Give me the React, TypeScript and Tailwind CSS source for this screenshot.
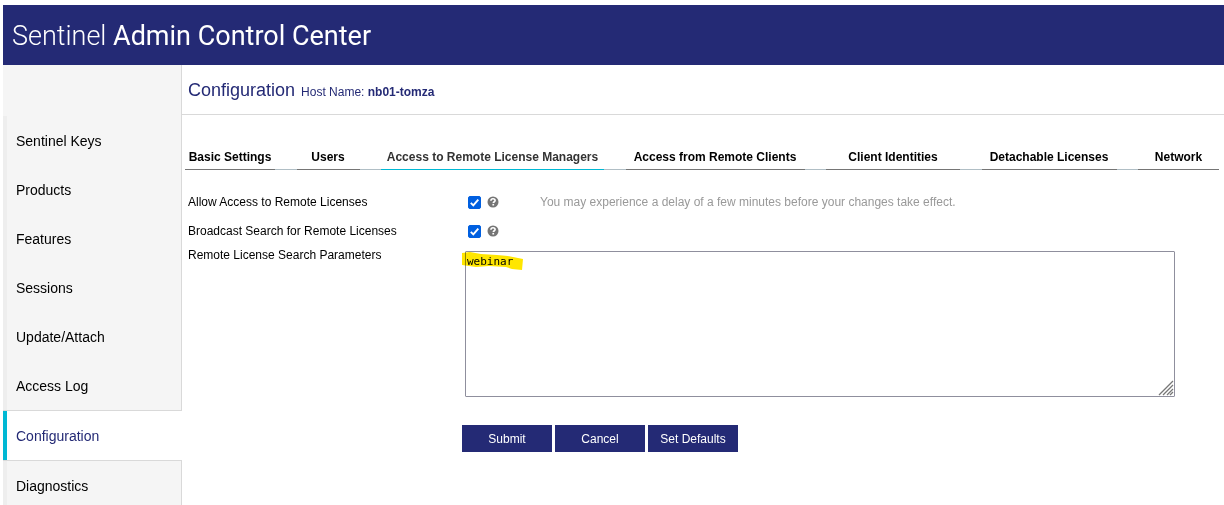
import React from 'react';

const navItems = [
  'Sentinel Keys',
  'Products',
  'Features',
  'Sessions',
  'Update/Attach',
  'Access Log',
  'Configuration',
  'Diagnostics',
];

const tabs = [
  { label: 'Basic Settings', width: 'w-[90px]' },
  { label: 'Users', width: 'w-[63px]' },
  { label: 'Access to Remote License Managers', width: 'w-[223px]', active: true },
  { label: 'Access from Remote Clients', width: 'w-[179px]' },
  { label: 'Client Identities', width: 'w-[134px]' },
  { label: 'Detachable Licenses', width: 'w-[135px]' },
  { label: 'Network', width: 'w-[81px]' },
];

function HelpIcon({ label }: { label: string }) {
  return (
    <button type="button" aria-label={label} className="cursor-pointer">
      <svg viewBox="0 0 12 12" className="block h-3 w-3">
        <circle cx="6" cy="6" r="5.5" fill="#757575" />
        <path
          d="M3.9 4.7C4 3.4 5 2.8 6 2.8c1.2 0 2.1.7 2.1 1.7 0 1.2-1.8 1.3-1.8 2.6"
          fill="none"
          stroke="#fff"
          strokeWidth="1.6"
        />
        <rect x="5.4" y="7.9" width="1.7" height="1.6" fill="#fff" />
      </svg>
    </button>
  );
}

function CheckRow({ id, label, note }: { id: string; label: string; note?: string }) {
  return (
    <div className="flex items-center">
      <label htmlFor={id} className="w-[280px] shrink-0">
        {label}
      </label>
      <span className="relative mr-[6px] block h-[13px] w-[13px] shrink-0">
        <input
          id={id}
          type="checkbox"
          defaultChecked
          className="peer block h-[13px] w-[13px] appearance-none rounded-[2px] border border-[#767676] bg-white checked:border-[#005fe0] checked:bg-[#005fe0]"
        />
        <svg
          viewBox="0 0 13 13"
          className="pointer-events-none absolute inset-0 hidden h-[13px] w-[13px] peer-checked:block"
        >
          <path d="M2.8 6.8 5.3 9.3 10.3 3.6" fill="none" stroke="#fff" strokeWidth="1.9" />
        </svg>
      </span>
      <HelpIcon label={`Help: ${label}`} />
      {note && <span className="ml-[41px] text-[#999]">{note}</span>}
    </div>
  );
}

export default function App() {
  return (
    <div className="flex h-screen flex-col overflow-hidden bg-white pt-[5px] pl-[3px] font-['Liberation_Sans',Arial,sans-serif] text-xs text-black">
      {/* Title bar */}
      <header className="flex h-[60px] shrink-0 items-center bg-[#242a75] pt-[3px] pl-[9px]">
        <span className="font-[Roboto,sans-serif] text-[27px] font-light whitespace-nowrap text-white">
          Sentinel <span className="font-normal">Admin Control Center</span>
        </span>
      </header>

      <div className="flex min-h-0 flex-1">
        {/* Sidebar */}
        <aside className="flex w-[179px] shrink-0 flex-col">
          <div className="h-[51px] shrink-0 border-r border-[#d9d9d9] bg-[#f5f5f5]" />
          <nav className="flex flex-1 flex-col text-sm">
            {navItems.map((item) => (
              <a
                key={item}
                href="#"
                className={
                  item === 'Configuration'
                    ? 'flex h-[51px] shrink-0 items-center border-y border-y-[#d9d9d9] bg-white text-[#242a75]'
                    : 'flex h-[49px] shrink-0 items-center border-r border-[#d9d9d9] bg-[#f5f5f5]'
                }
              >
                <span
                  className={
                    item === 'Configuration'
                      ? 'mr-[9px] w-1 self-stretch bg-[#00b8d4]'
                      : 'mr-[9px] w-1 self-stretch bg-[#eeeeee]'
                  }
                />
                {item}
              </a>
            ))}
          </nav>
        </aside>

        {/* Content */}
        <main className="min-w-0 flex-1">
          <div className="flex h-[50px] items-baseline gap-[6px] border-b border-[#d9d9d9] pt-[11px] pl-[6px] text-[#242a75]">
            <h1 className="text-lg">Configuration</h1>
            <p>
              Host Name: <b>nb01-tomza</b>
            </p>
          </div>

          <div className="mt-[34px] mr-[5px] ml-[3px] flex justify-between border-b border-[#b0bec5]">
            {tabs.map((tab) => (
              <a
                key={tab.label}
                href="#"
                className={`${tab.width} -mb-px flex justify-center border-b pb-1 font-bold whitespace-nowrap ${
                  tab.active ? 'border-[#00b8d4] text-[#333]' : 'border-[#757575]'
                }`}
              >
                {tab.label}
              </a>
            ))}
          </div>

          <form className="pr-[49px] pl-[6px]" onSubmit={(e) => e.preventDefault()}>
            <div className="space-y-[13px] pt-6">
              <CheckRow
                id="allow"
                label="Allow Access to Remote Licenses"
                note="You may experience a delay of a few minutes before your changes take effect."
              />
              <CheckRow id="broadcast" label="Broadcast Search for Remote Licenses" />
            </div>

            <div className="mt-2 flex items-start">
              <label htmlFor="params" className="w-[277px] shrink-0">
                Remote License Search Parameters
              </label>
              <div className="relative mt-1 flex-1">
                <textarea
                  id="params"
                  spellCheck={false}
                  defaultValue="webinar"
                  className="block h-[146px] w-full resize-none rounded-[1px] border border-[#8f8f9d] bg-white px-px py-[2px] font-['DejaVu_Sans_Mono',monospace] text-[11px] leading-4 outline-none"
                />
                {/* Highlighter stroke over the search term */}
                <svg
                  viewBox="0 0 62 20"
                  className="pointer-events-none absolute top-0 -left-1 h-5 w-[62px] mix-blend-multiply"
                >
                  <path
                    d="M1 2 9 1 20 3 36 4 47 5 62 8 61 19 51 18 45 16 28 15 15 16 1 14Z"
                    fill="#ffe600"
                  />
                </svg>
                {/* Resize grip */}
                <svg
                  viewBox="0 0 16 16"
                  className="pointer-events-none absolute right-px bottom-px h-4 w-4"
                >
                  <path
                    d="M1 15 15 1M5 15 15 5M9 15 15 9M12 15 15 12"
                    fill="none"
                    stroke="#777"
                    strokeWidth="1.3"
                  />
                </svg>
              </div>
            </div>

            <div className="mt-7 ml-[274px] flex gap-[3px] text-white">
              <button type="submit" className="h-[27px] w-[90px] bg-[#242a75]">
                Submit
              </button>
              <button type="button" className="h-[27px] w-[90px] bg-[#242a75]">
                Cancel
              </button>
              <button type="button" className="h-[27px] w-[90px] bg-[#242a75]">
                Set Defaults
              </button>
            </div>
          </form>
        </main>
      </div>
    </div>
  );
}
